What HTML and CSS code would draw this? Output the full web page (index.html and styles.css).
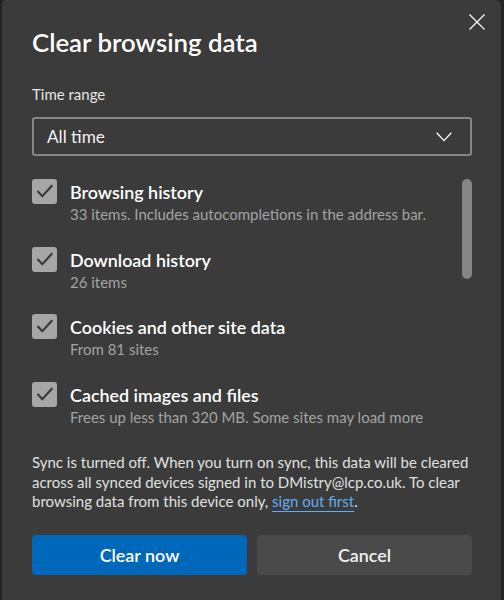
FILE: index.html
```html
<!DOCTYPE html>
<html lang="en">
<head>
  <meta charset="UTF-8" />
  <meta name="viewport" content="width=device-width, initial-scale=1.0" />
  <title>Clear browsing data</title>
  <link rel="stylesheet" href="styles.css">
</head>
<body>
  <div class="dialog">
    <button class="close-btn" aria-label="Close">
      <svg width="16" height="16" viewBox="0 0 16 16">
        <path d="M0.5 0.5 L15.5 15.5 M15.5 0.5 L0.5 15.5" stroke="#fff" stroke-width="1.2" fill="none" />
      </svg>
    </button>

    <h2 class="title">Clear browsing data</h2>

    <label class="field-label" for="range">Time range</label>
    <div class="select" id="range">
      <span>All time</span>
      <svg width="16" height="10" viewBox="0 0 16 10">
        <path d="M0.7 0.8 L8 8.6 L15.3 0.8" stroke="#fff" stroke-width="1.3" fill="none" />
      </svg>
    </div>

    <div class="list">
      <div class="items">
        <div class="item">
          <span class="check">
            <svg width="25" height="25" viewBox="0 0 25 25"><path d="M5.5 12 L10.3 17.2 L20.3 6.3" stroke="#3a3a3a" stroke-width="2.2" fill="none" /></svg>
          </span>
          <div class="item-text">
            <div class="item-title">Browsing history</div>
            <div class="item-sub">33 items. Includes autocompletions in the address bar.</div>
          </div>
        </div>
        <div class="item">
          <span class="check">
            <svg width="25" height="25" viewBox="0 0 25 25"><path d="M5.5 12 L10.3 17.2 L20.3 6.3" stroke="#3a3a3a" stroke-width="2.2" fill="none" /></svg>
          </span>
          <div class="item-text">
            <div class="item-title">Download history</div>
            <div class="item-sub">26 items</div>
          </div>
        </div>
        <div class="item">
          <span class="check">
            <svg width="25" height="25" viewBox="0 0 25 25"><path d="M5.5 12 L10.3 17.2 L20.3 6.3" stroke="#3a3a3a" stroke-width="2.2" fill="none" /></svg>
          </span>
          <div class="item-text">
            <div class="item-title">Cookies and other site data</div>
            <div class="item-sub">From 81 sites</div>
          </div>
        </div>
        <div class="item">
          <span class="check">
            <svg width="25" height="25" viewBox="0 0 25 25"><path d="M5.5 12 L10.3 17.2 L20.3 6.3" stroke="#3a3a3a" stroke-width="2.2" fill="none" /></svg>
          </span>
          <div class="item-text">
            <div class="item-title">Cached images and files</div>
            <div class="item-sub">Frees up less than 320 MB. Some sites may load more</div>
          </div>
        </div>
      </div>
      <div class="scroll-track"><div class="scroll-thumb"></div></div>
    </div>

    <p class="sync-note">
      Sync is turned off. When you turn on sync, this data will be cleared across all synced devices signed in to DMistry@lcp.co.uk. To clear browsing data from this device only, <a href="#">sign out first</a>.
    </p>

    <div class="actions">
      <button class="btn btn-primary">Clear now</button>
      <button class="btn btn-secondary">Cancel</button>
    </div>
  </div>
</body>
</html>
```
FILE: styles.css
```css
body {
  margin: 0;
  background-color: #242424;
  font-family: 'Lato', 'Liberation Sans', sans-serif;
  color: #e6e6e6;
}

.dialog {
  position: relative;
  margin-left: 2px;
  width: 499px;
  height: 600px;
  box-sizing: border-box;
  padding: 26px 29px 0 30px;
  background-color: #3b3b3b;
  border-radius: 4px 6px 0 0;
  overflow: hidden;
}

.close-btn {
  position: absolute;
  top: 14px;
  right: 16px;
  width: 16px;
  height: 16px;
  padding: 0;
  border: none;
  background: none;
  display: flex;
}

.title {
  margin: 0;
  font-size: 25.8px;
  font-weight: 600;
  line-height: 32px;
  color: #fff;
}

.field-label {
  display: block;
  margin-top: 26px;
  font-size: 15px;
  line-height: 20px;
  color: #e6e6e6;
}

.select {
  margin-top: 13px;
  height: 39px;
  box-sizing: border-box;
  border: 2px solid #878787;
  border-radius: 3px;
  padding: 0 18px 0 13px;
  display: flex;
  align-items: center;
  justify-content: space-between;
  font-size: 17.2px;
  color: #f2f2f2;
}

.list {
  margin-top: 23px;
  height: 254px;
  display: flex;
  overflow: hidden;
}

.items {
  flex: 1;
  display: flex;
  flex-direction: column;
  gap: 22.7px;
}

.item {
  display: flex;
  gap: 13px;
}

.check {
  flex: none;
  width: 25px;
  height: 25px;
  border-radius: 3px;
  background-color: #a6a6a6;
  display: flex;
}

.item-title {
  margin-top: 2px;
  font-size: 17.9px;
  font-weight: 600;
  line-height: 23px;
  color: #fff;
}

.item-sub {
  font-size: 15px;
  line-height: 20px;
  color: #a3a3a3;
}

.scroll-track {
  flex: none;
  width: 10px;
}

.scroll-thumb {
  height: 100px;
  border-radius: 5px;
  background-color: #858585;
}

.sync-note {
  margin: 20px 0 0;
  font-size: 15px;
  line-height: 19.5px;
  color: #e0e0e0;
}

.sync-note a {
  color: #62aef0;
  text-decoration: underline;
  text-underline-offset: 4px;
}

.actions {
  margin-top: 23px;
  display: grid;
  grid-template-columns: 1fr 1fr;
  gap: 10px;
}

.btn {
  height: 40px;
  border: none;
  border-radius: 4px;
  font-family: inherit;
  font-size: 17.9px;
  font-weight: 600;
  cursor: pointer;
}

.btn-primary {
  background-color: #0068ba;
  color: #fff;
}

.btn-secondary {
  background-color: #4a4a4a;
  color: #f2f2f2;
}
```
